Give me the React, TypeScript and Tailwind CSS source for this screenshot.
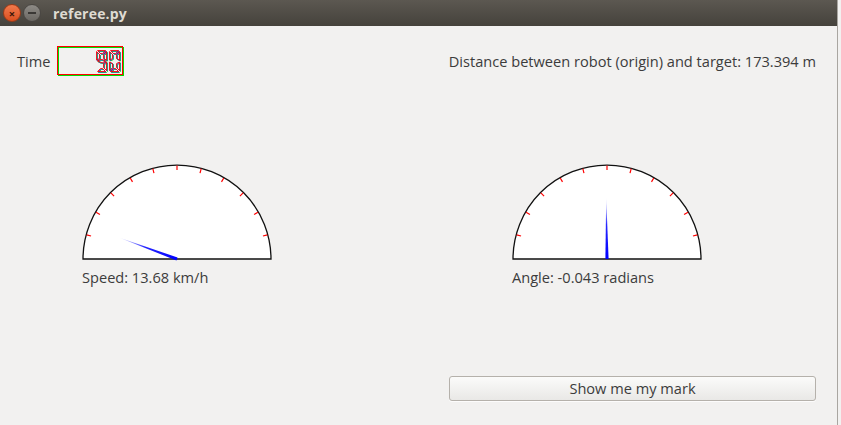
import React from 'react'

const SEG = (w: number, h: number, t: number): Record<string, number[][]> => ({
  a: [[1, 0], [w - 1, 0], [w - 1 - t, t], [1 + t, t]],
  b: [[w, 1], [w, h / 2 - 1], [w - t, h / 2 - 1 - t / 2], [w - t, 1 + t]],
  c: [[w, h / 2 + 1], [w, h - 1], [w - t, h - 1 - t], [w - t, h / 2 + 1 + t / 2]],
  d: [[1, h], [w - 1, h], [w - 1 - t, h - t], [1 + t, h - t]],
  e: [[0, h / 2 + 1], [0, h - 1], [t, h - 1 - t], [t, h / 2 + 1 + t / 2]],
  f: [[0, 1], [0, h / 2 - 1], [t, h / 2 - 1 - t / 2], [t, 1 + t]],
  g: [[1, h / 2], [1 + t, h / 2 - t / 2], [w - 1 - t, h / 2 - t / 2], [w - 1, h / 2], [w - 1 - t, h / 2 + t / 2], [1 + t, h / 2 + t / 2]],
})

const DIGITS: Record<string, string> = {
  '9': 'abcdfg',
  '0': 'abcdef',
}

function Digit({ ch, x, y }: { ch: string; x: number; y: number }) {
  const segs = SEG(10, 21, 3)
  const layers = [
    { dx: 1, dy: 1, color: '#00e000' },
    { dx: 0.5, dy: 0.5, color: '#3030ff' },
    { dx: 0, dy: 0, color: '#ff0000' },
  ]
  return (
    <g>
      {layers.map(l =>
        DIGITS[ch].split('').map(s => (
          <polygon
            key={l.color + s}
            points={segs[s].map(p => `${p[0] + x + l.dx},${p[1] + y + l.dy}`).join(' ')}
            fill="none"
            stroke={l.color}
            strokeWidth={1}
            opacity={0.85}
          />
        ))
      )}
    </g>
  )
}

function Lcd() {
  return (
    <svg width="68" height="31" viewBox="0 0 68 31">
      <rect x="1.5" y="1.5" width="65" height="28" fill="none" stroke="#00dd00" strokeWidth="1" />
      <rect x="0.5" y="0.5" width="65" height="28" fill="none" stroke="#ff0000" strokeWidth="1" />
      <Digit ch="9" x={39.5} y={4.5} />
      <Digit ch="0" x={52.5} y={4.5} />
    </svg>
  )
}

function Gauge({ angle, id }: { angle: number; id: string }) {
  // needle direction, counter-clockwise from the right horizontal
  const cx = 95
  const cy = 95
  const r = 94
  const len = 62
  const tx = cx + len * Math.cos(angle)
  const ty = cy - len * Math.sin(angle)
  const px = Math.sin(angle) * 1.6
  const py = Math.cos(angle) * 1.6
  const ticks = Array.from({ length: 11 }, (_, i) => ((i + 1) * 15 * Math.PI) / 180)
  return (
    <svg width="190" height="97" viewBox="0 0 190 97">
      <defs>
        <linearGradient id={id} gradientUnits="userSpaceOnUse" x1={cx} y1={cy} x2={tx} y2={ty}>
          <stop offset="0" stopColor="#0000ff" stopOpacity="1" />
          <stop offset="0.55" stopColor="#0000ff" stopOpacity="0.85" />
          <stop offset="1" stopColor="#0000ff" stopOpacity="0" />
        </linearGradient>
      </defs>
      <path d={`M ${cx - r} ${cy} A ${r} ${r} 0 0 1 ${cx + r} ${cy} Z`} fill="#ffffff" stroke="#111111" strokeWidth="1.3" />
      {ticks.map((a, i) => (
        <line
          key={i}
          x1={cx + (r - 0.5) * Math.cos(a)}
          y1={cy - (r - 0.5) * Math.sin(a)}
          x2={cx + (r - 5) * Math.cos(a)}
          y2={cy - (r - 5) * Math.sin(a)}
          stroke="#ff0000"
          strokeWidth="1.2"
        />
      ))}
      <polygon
        points={`${cx + px},${cy + py} ${cx - px},${cy - py} ${tx},${ty}`}
        fill={`url(#${id})`}
      />
    </svg>
  )
}

export default function App() {
  return (
    <div className="w-[841px] h-[425px] bg-[#f2f1f0] overflow-hidden font-['Open_Sans',sans-serif] text-[#3c3c3c]">
      <div className="w-[838px] h-full border-r border-[#a9a6a1] flex flex-col">
        <div className="h-[26px] flex items-center bg-gradient-to-b from-[#5c5851] to-[#45423c]">
          <div className="ml-[3px] w-[18px] h-[18px] rounded-full bg-gradient-to-b from-[#f27a4c] to-[#d94f1e] border border-[#9c3a17] flex items-center justify-center text-[#3a1508] text-[11px] font-bold leading-none">
            ×
          </div>
          <div className="ml-[2px] w-[18px] h-[18px] rounded-full bg-gradient-to-b from-[#8e8b86] to-[#6b6863] border border-[#4a4743] flex items-center justify-center">
            <div className="w-[8px] h-[2px] bg-[#3a3835]" />
          </div>
          <span className="ml-[12px] text-[14px] font-bold text-[#dfdbd2] tracking-[0.2px]">
            referee.py
          </span>
        </div>

        <div className="mt-[20px] flex items-center justify-between pl-[17px] pr-[21px] h-[30px]">
          <div className="flex items-center gap-[7px]">
            <span className="text-[14.6px] pt-[1px]">Time</span>
            <Lcd />
          </div>
          <span className="text-[14.6px] pt-[1px]">Distance between robot (origin) and target: 173.394 m</span>
        </div>

        <div className="mt-[88px] flex pl-[82px]">
          <div className="w-[430px] flex flex-col">
            <Gauge angle={Math.PI - 0.354} id="g1" />
            <span className="mt-[6px] text-[14.6px]">Speed: 13.68 km/h</span>
          </div>
          <div className="flex flex-col">
            <Gauge angle={Math.PI / 2 + 0.013} id="g2" />
            <span className="mt-[6px] text-[14.6px]">Angle: -0.043 radians</span>
          </div>
        </div>

        <div className="mt-auto mb-[24px] flex justify-end pr-[21px]">
          <button className="w-[367px] h-[25px] rounded-[3px] border border-[#b5b1ab] bg-gradient-to-b from-[#fbfbfa] to-[#e9e8e6] text-[14.6px] text-[#3c3c3c] shadow-[0_1px_0_rgba(255,255,255,0.8)]">
            Show me my mark
          </button>
        </div>
      </div>
    </div>
  )
}
